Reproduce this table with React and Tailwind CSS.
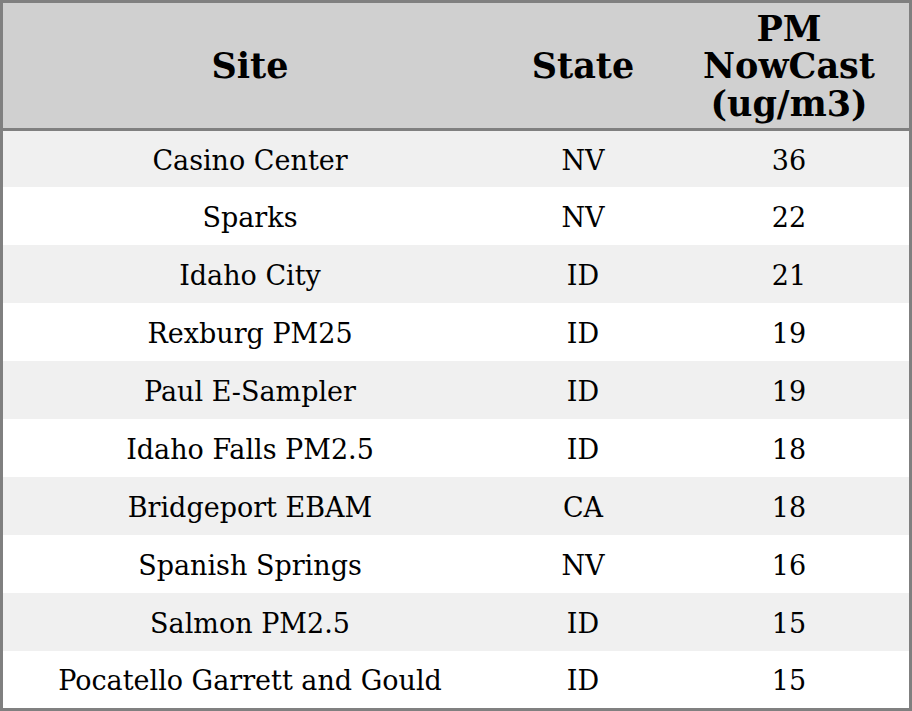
import React from 'react';

const rows = [
  ['Casino Center', 'NV', '36'],
  ['Sparks', 'NV', '22'],
  ['Idaho City', 'ID', '21'],
  ['Rexburg PM25', 'ID', '19'],
  ['Paul E-Sampler', 'ID', '19'],
  ['Idaho Falls PM2.5', 'ID', '18'],
  ['Bridgeport EBAM', 'CA', '18'],
  ['Spanish Springs', 'NV', '16'],
  ['Salmon PM2.5', 'ID', '15'],
  ['Pocatello Garrett and Gould', 'ID', '15'],
];

export default function App() {
  return (
    <div className="w-[912px] h-[711px] border-[3px] border-[#808080] bg-white text-black font-['DejaVu_Serif',serif]">
      {/* header */}
      <div className="grid grid-cols-[494px_172px_240px] h-[128px] pt-px bg-[#d0d0d0] border-b-[3px] border-[#808080] text-[35px] font-bold leading-[37.5px]">
        <div className="flex items-center justify-center">Site</div>
        <div className="flex items-center justify-center">State</div>
        <div className="flex items-center justify-center text-center">
          PM<br />NowCast<br />(ug/m3)
        </div>
      </div>

      {/* body */}
      <div className="flex flex-col h-[577px]">
        {rows.map((row, i) => (
          <div
            key={i}
            className={`grid grid-cols-[494px_172px_240px] items-center text-center text-[27px] pt-[4px] ${
              i === 0 ? 'h-[56px]' : i === rows.length - 1 ? 'h-[57px]' : 'h-[58px]'
            } ${i % 2 === 0 ? 'bg-[#f0f0f0]' : 'bg-white'}`}
          >
            <div>{row[0]}</div>
            <div>{row[1]}</div>
            <div>{row[2]}</div>
          </div>
        ))}
      </div>
    </div>
  );
}
